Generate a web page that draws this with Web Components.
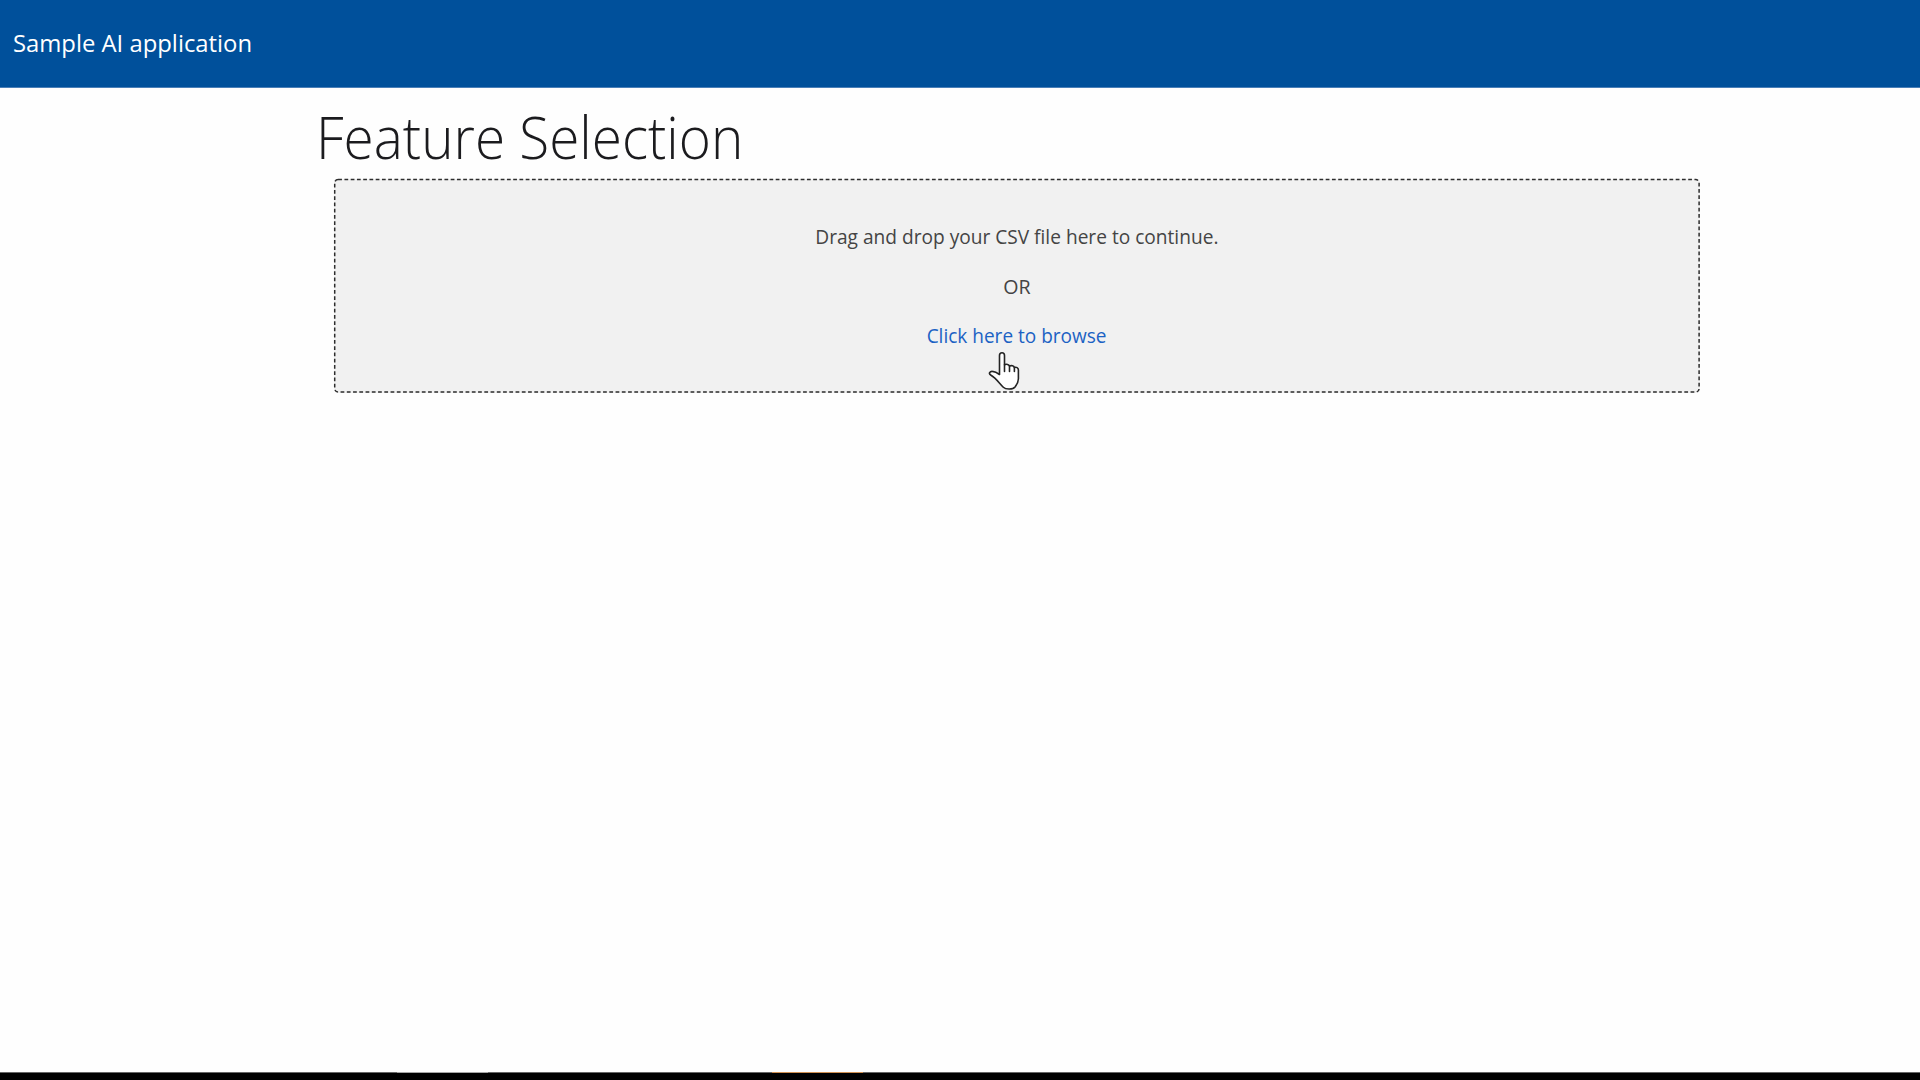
<!DOCTYPE html>
<html lang="en">
<head>
<meta charset="utf-8">
<title>Sample AI application</title>
<style>
html,body{margin:0;height:100%;overflow:hidden;background:#fefefe}
body{font-family:"Open Sans","Noto Sans",sans-serif}
</style>
</head>
<body>
<sample-app></sample-app>
<script>
const define = (name, markup) => customElements.define(name, class extends HTMLElement {
  constructor() {
    super();
    this.attachShadow({mode: "open"}).innerHTML = markup;
  }
});

define("app-header", `
<style>
:host{display:flex;align-items:center;height:88px;padding:0 0 2px 12.500px;box-sizing:border-box;background:#00509b;color:#fff;border-bottom:1px solid #4a7fb8;flex:none}
span{font-size:24px;line-height:32px;white-space:nowrap;transform-origin:0 50%;transform:scaleX(.993)}
</style><span><slot></slot></span>`);

define("page-title", `
<style>
:host{display:block;height:91px;flex:none}
h1{margin:0 0 0 -1.500px;padding:7px 0 0;font-size:59px;line-height:82px;font-weight:300;color:#1b1b1e;white-space:nowrap;width:max-content;transform-origin:0 50%;transform:scaleX(.93)}
</style><h1><slot></slot></h1>`);

define("hand-cursor", `
<style>:host{display:block;width:34px;height:42px}svg{display:block}</style>
<svg width="34" height="42" viewBox="0 0 34 42" fill="#fff" stroke="#242424" stroke-width="1.6" stroke-linejoin="round" stroke-linecap="round">
<path d="M11.500 24.500V5.500c0-3.600 5-3.600 5 0v9.200c2-.8 4.400-.4 5 1.300 2-.8 4.300-.2 4.900 1.500 1.800-.7 4 .1 4 2.500v8.700c0 3.500-1.500 5.700-3.400 8.300-2 2.600-9.200 2.700-11.700.2C11.500 33.500 8 28 3 25.200 0 23.500 2 21.200 4.400 21.400c2.500.1 5 1.500 7.100 3.100z"/>
<path d="M16.500 14.700v6.800M21.500 16v5.500M26.400 17.500v4"/>
</svg>`);

define("drop-zone", `
<style>
:host{display:flex;flex-direction:column;align-items:center;position:relative;box-sizing:border-box;width:1366px;height:214px;margin-left:17px;padding-top:33px;background:#f1f1f1;border-radius:4px;color:#444;font-size:20px;line-height:50px}
.frame{position:absolute;inset:0;width:1366px;height:214px;overflow:visible}
::slotted(*){display:block;white-space:nowrap;height:49.700px}
hand-cursor{position:absolute;left:654px;top:171px}
</style>
<svg class="frame"><rect x=".7" y=".5" width="1364.400" height="212.600" rx="3.500" fill="none" stroke="#2d2d2d" stroke-width="1.500" stroke-dasharray="3.750 2.500"/></svg>
<slot></slot>
<hand-cursor></hand-cursor>`);

define("sample-app", `
<style>
:host{display:flex;flex-direction:column;height:1080px;width:1920px}
main{flex:1;padding-left:317px;display:flex;flex-direction:column}
footer{height:8px;background:#000;display:flex;flex:none}
footer i{height:1px;background:#666;flex:0 0 397px}
footer i.light{background:#a5a5a5;flex-basis:91px}
footer i.mid{flex-basis:284px}
footer i.accent{background:#d09052;flex-basis:91px}
footer i.rest{flex:1}
.drag{transform:scaleX(.956)}
.or{transform:scaleX(.98)}
.link{color:#1c62c4;text-decoration:none;transform:scaleX(.951)}
</style>
<app-header>Sample AI application</app-header>
<main>
<page-title>Feature Selection</page-title>
<drop-zone><span class="drag">Drag and drop your CSV file here to continue.</span><span class="or">OR</span><a class="link" href="#">Click here to browse</a></drop-zone>
</main>
<footer><i></i><i class="light"></i><i class="mid"></i><i class="accent"></i><i class="rest"></i></footer>`);
</script>
</body>
</html>
